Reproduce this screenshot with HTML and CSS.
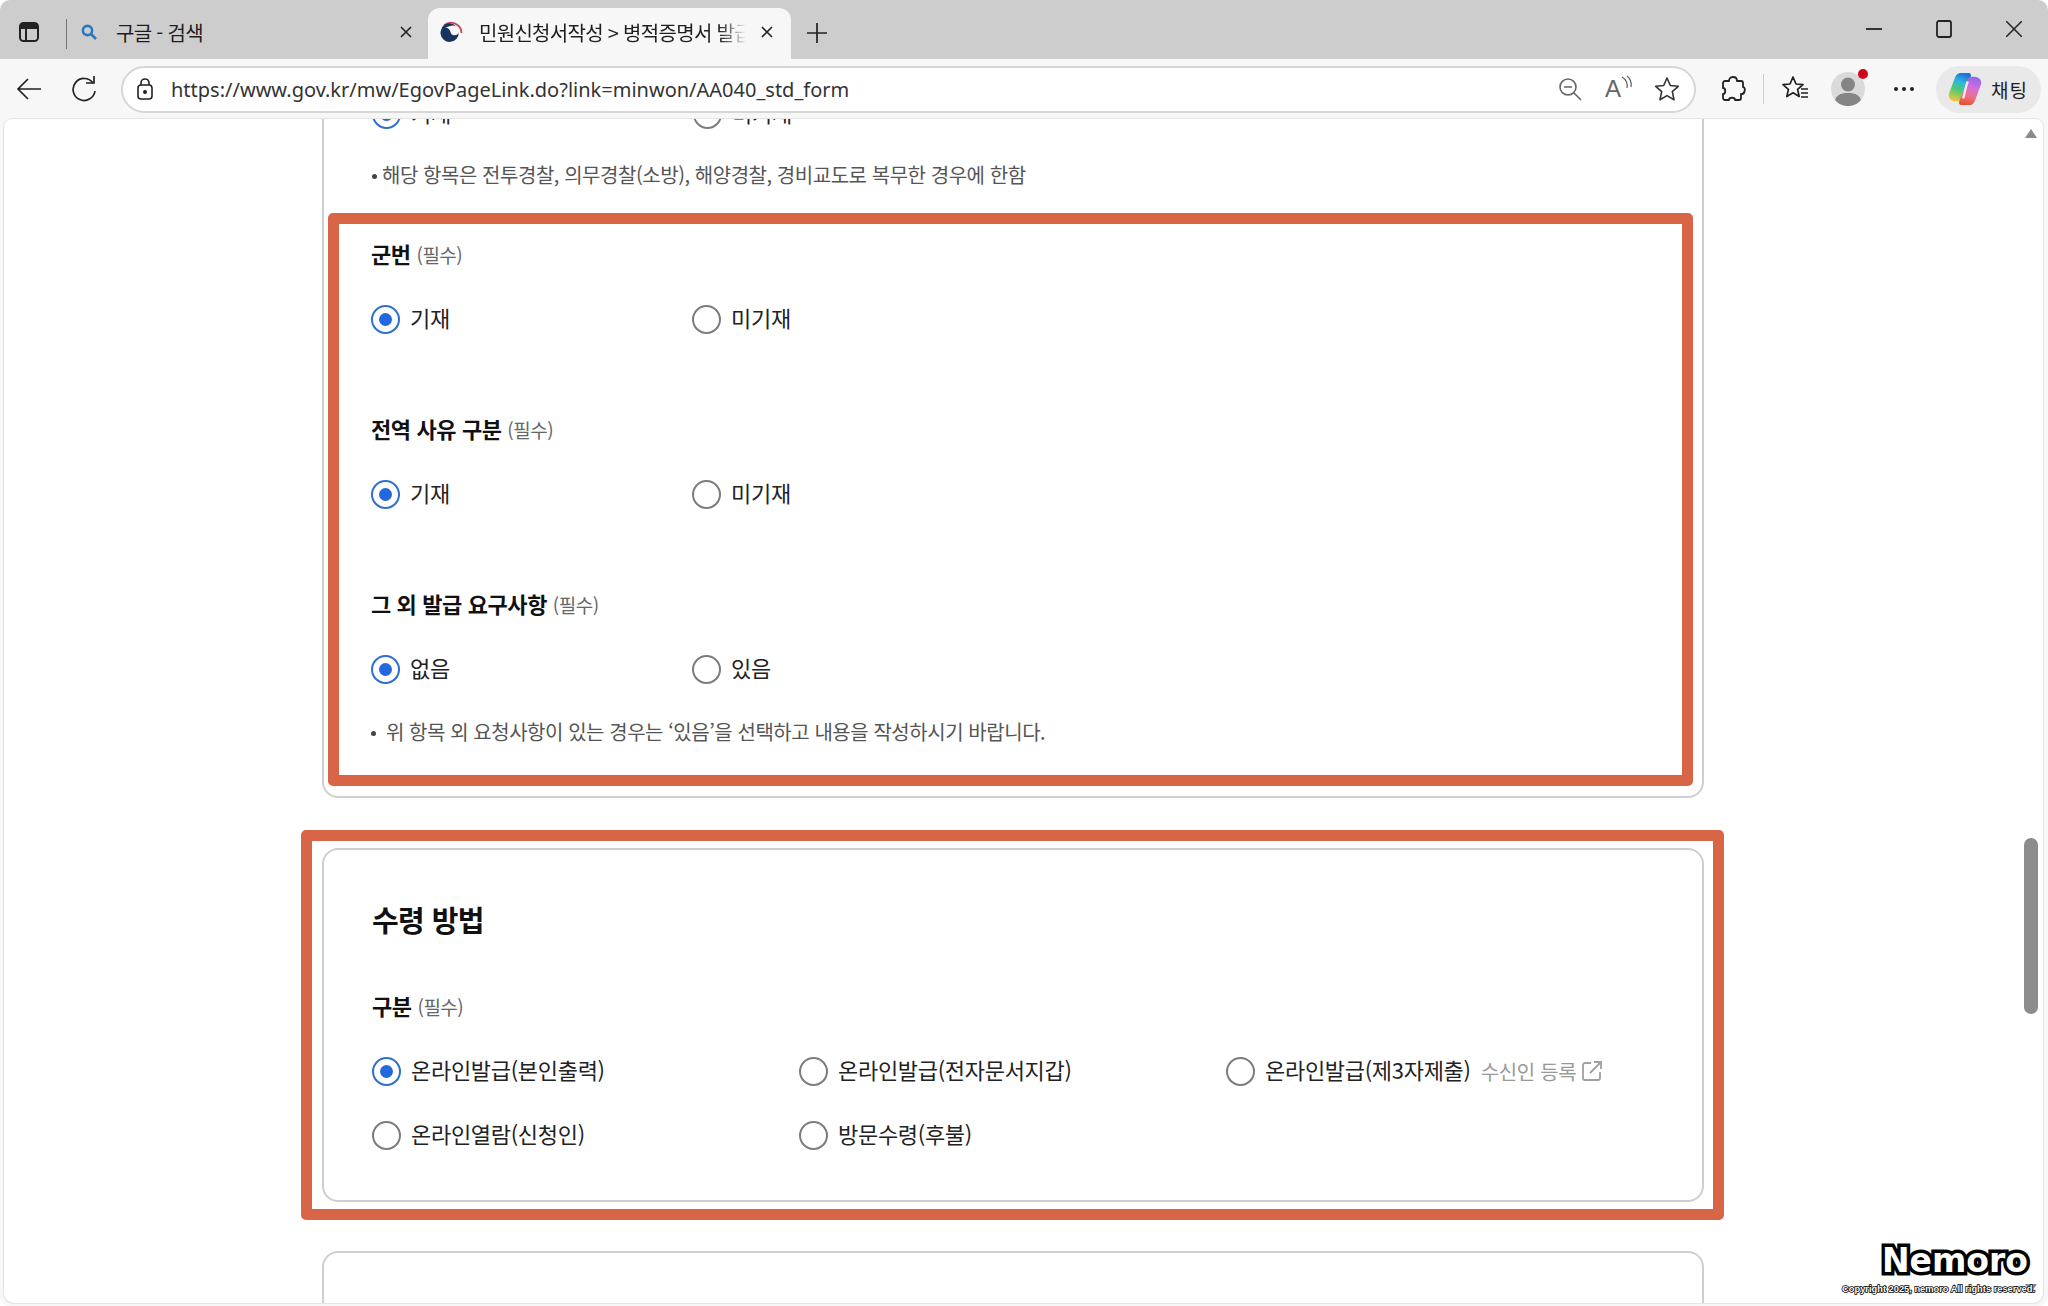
FILE: index.html
```html
<!DOCTYPE html>
<html lang="ko">
<head>
	<meta charset="utf-8">
	<title>민원신청서작성 &gt; 병적증명서 발급</title>
	<link rel="stylesheet" href="styles.css">
</head>
<body>
<div class="window">
	<div class="tabbar">
		<svg class="tab-side" width="22" height="22" viewBox="0 0 22 22" fill="none" stroke="#222" stroke-width="2"><rect x="2" y="2" width="18" height="18" rx="3.5"/><path d="M2 7h18M8 7v13" /><path d="M3 3h16v4H3z" fill="#222" stroke="none"/></svg>
		<div class="tab-sep"></div>
		<div class="tab">
			<svg width="18" height="18" viewBox="0 0 18 18" fill="none" stroke="#2a78c2" stroke-width="2.6"><circle cx="7.5" cy="7.5" r="4.6"/><path d="M11 11l5 5"/></svg>
			<span class="tab-title">구글 - 검색</span>
			<svg class="tab-x" width="14" height="14" viewBox="0 0 14 14" stroke="#222" stroke-width="1.6"><path d="M2 2l10 10M12 2L2 12"/></svg>
		</div>
		<div class="tab tab-active">
			<svg width="24" height="24" viewBox="0 0 24 24" fill="none"><path d="M5 5.500A10.500 10.500 0 0 1 22.500 13" stroke="#c9485c" stroke-width="1.800"/><path d="M1.500 13.500a5 5 0 0 1 10-1.500 4.200 4.200 0 0 0 8.200 0 9 9 0 0 1-18.200 1.500z" fill="#17335f"/><path d="M2 11a8.500 8.500 0 0 1 15-4.500 7 7 0 0 0-6-.5c-3 .8-6 2.500-9 5z" fill="#17335f"/></svg>
			<span class="tab-title tab-fade">민원신청서작성 &gt; 병적증명서 발급</span>
			<svg class="tab-x" width="14" height="14" viewBox="0 0 14 14" stroke="#222" stroke-width="1.6"><path d="M2 2l10 10M12 2L2 12"/></svg>
		</div>
		<svg class="tab-plus" width="22" height="22" viewBox="0 0 22 22" stroke="#222" stroke-width="1.7"><path d="M11 1v20M1 11h20"/></svg>
		<div class="win-btns">
			<svg width="16" height="16" viewBox="0 0 16 16" stroke="#222" stroke-width="1.8"><path d="M0 8h16"/></svg>
			<svg width="16" height="18" viewBox="0 0 16 18" fill="none" stroke="#222" stroke-width="1.8"><rect x="1" y="1" width="14" height="16" rx="2"/></svg>
			<svg width="16" height="16" viewBox="0 0 16 16" stroke="#222" stroke-width="1.5"><path d="M0 0l16 16M16 0L0 16"/></svg>
		</div>
	</div>

	<div class="toolbar">
		<svg class="tool-back" width="26" height="24" viewBox="0 0 26 24" fill="none" stroke="#222" stroke-width="1.7"><path d="M25 12H2M12 2L2 12l10 10"/></svg>
		<svg class="tool-reload" width="26" height="26" viewBox="0 0 26 26" fill="none" stroke="#222" stroke-width="1.7"><path d="M22 7a11 11 0 1 0 2 8"/><path d="M15 7h8V0" /></svg>
		<div class="address">
			<svg width="18" height="24" viewBox="0 0 18 24" fill="none" stroke="#222" stroke-width="1.6"><rect x="2" y="8" width="14" height="14" rx="3"/><path d="M5 8V6a4 4 0 0 1 8 0v2"/><circle cx="9" cy="15" r="1.200" fill="#222"/></svg>
			<span class="url">https://www.gov.kr/mw/EgovPageLink.do?link=minwon/AA040_std_form</span>
			<svg class="addr-zoom" width="24" height="24" viewBox="0 0 24 24" fill="none" stroke="#666" stroke-width="1.6"><circle cx="10" cy="10" r="8"/><path d="M6 10h8M16 16l7 7"/></svg>
			<span class="addr-read">A<svg width="12" height="18" viewBox="0 0 12 18" fill="none" stroke="#666" stroke-width="1.300"><path d="M1 2c4 2 6 7 5 11M6 1c3 2 5 7 4 11"/></svg></span>
			<svg class="addr-star" width="26" height="26" viewBox="0 0 26 26" fill="none" stroke="#333" stroke-width="1.6" stroke-linejoin="round"><path d="M13 2l3.300 7.500 8 .8-6 5.400 1.700 8L13 19.600 6 23.700l1.700-8-6-5.400 8-.8z"/></svg>
		</div>
		<svg class="tool-ext" width="26" height="28" viewBox="0 0 26 28" fill="none" stroke="#222" stroke-width="1.8" stroke-linejoin="round"><path d="M13 2c3 0 4 2 4 4h4a2 2 0 0 1 2 2v4c3 0 2 7-1 7h-1v4a2 2 0 0 1-2 2h-4c0-3-6-3-6 0H5a2 2 0 0 1-2-2v-4c3 0 3-6 0-6V8a2 2 0 0 1 2-2h4c0-2 1-4 4-4z"/></svg>
		<div class="tool-sep"></div>
		<svg class="tool-fav" width="28" height="28" viewBox="0 0 28 28" fill="none" stroke="#222" stroke-width="1.700" stroke-linejoin="round"><path d="M11 2l3 7 7 .6-5.400 4.800 1.600 7.100-6.200-3.700-6.200 3.700 1.600-7.100L1 9.600 8 9z"/><path d="M19 14h7M19 18h7M19 22h7" /></svg>
		<div class="avatar">
			<svg width="34" height="34" viewBox="0 0 34 34"><circle cx="17" cy="17" r="17" fill="#dadada"/><circle cx="17" cy="12.500" r="7" fill="#858585"/><path d="M4 28c2-6 7-7 13-7s11 1 13 7a17 17 0 0 1-26 0z" fill="#858585"/></svg>
			<span class="avatar-dot"></span>
		</div>
		<div class="tool-more"><i></i><i></i><i></i></div>
		<div class="chat">
			<svg width="34" height="36" viewBox="0 0 36 38"><defs><linearGradient id="cpLeft" x1="0.600" y1="0" x2="0.300" y2="1"><stop offset="0" stop-color="#1f6fd8"/><stop offset="0.300" stop-color="#2fb4e0"/><stop offset="0.600" stop-color="#4fcb72"/><stop offset="1" stop-color="#f2c53d"/></linearGradient><linearGradient id="cpRight" x1="0.600" y1="0" x2="0.400" y2="1"><stop offset="0" stop-color="#8f6be8"/><stop offset="0.400" stop-color="#d76fd8"/><stop offset="0.700" stop-color="#f0708a"/><stop offset="1" stop-color="#e8502f"/></linearGradient></defs><path d="M13 2h9c2 0 3 2 2 4L15 29c-1 2-2 3-4 3H8c-5 0-8-4-7-8l6-16c1-3 3-6 6-6z" fill="url(#cpLeft)"/><path d="M23 36H14c-2 0-3-2-2-4L21 9c1-2 2-3 4-3h3c5 0 8 4 7 8l-6 16c-1 3-3 6-6 6z" fill="url(#cpRight)"/><path d="M21 11c-2 4-3 11-5 18" fill="none" stroke="#f6e6ee" stroke-width="2.500"/></svg>
			<span>채팅</span>
		</div>
	</div>

	<div class="viewport">
		<div class="page">
			<div class="card card-top">
				<div class="radios radios-two">
					<label class="radio"><span class="dot dot-on"></span>기재</label>
					<label class="radio"><span class="dot"></span>미기재</label>
				</div>
				<p class="note note-top">해당 항목은 전투경찰, 의무경찰(소방), 해양경찰, 경비교도로 복무한 경우에 한함</p>
				<div class="mark mark-inner">
					<div class="field-label"><b>군번</b> <small>(필수)</small></div>
					<div class="radios radios-two">
						<label class="radio"><span class="dot dot-on"></span>기재</label>
						<label class="radio"><span class="dot"></span>미기재</label>
					</div>
					<div class="field-label field-next"><b>전역 사유 구분</b> <small>(필수)</small></div>
					<div class="radios radios-two">
						<label class="radio"><span class="dot dot-on"></span>기재</label>
						<label class="radio"><span class="dot"></span>미기재</label>
					</div>
					<div class="field-label field-next"><b>그 외 발급 요구사항</b> <small>(필수)</small></div>
					<div class="radios radios-two">
						<label class="radio"><span class="dot dot-on"></span>없음</label>
						<label class="radio"><span class="dot"></span>있음</label>
					</div>
					<p class="note note-bottom">위 항목 외 요청사항이 있는 경우는 ‘있음’을 선택하고 내용을 작성하시기 바랍니다.</p>
				</div>
			</div>

			<div class="mark mark-outer">
				<div class="card card-receive">
					<h2 class="card-title">수령 방법</h2>
					<div class="field-label field-receive"><b>구분</b> <small>(필수)</small></div>
					<div class="radios radios-three">
						<label class="radio"><span class="dot dot-on"></span>온라인발급(본인출력)</label>
						<label class="radio"><span class="dot"></span>온라인발급(전자문서지갑)</label>
						<label class="radio"><span class="dot"></span>온라인발급(제3자제출)<a class="reg-link">수신인 등록<svg width="20" height="20" viewBox="0 0 20 20" fill="none" stroke="#a0a0a0" stroke-width="1.800"><path d="M9 2H3a2 2 0 0 0-2 2v13a2 2 0 0 0 2 2h13a2 2 0 0 0 2-2v-6M12 1h7v7M19 1L8 12"/></svg></a></label>
						<label class="radio"><span class="dot"></span>온라인열람(신청인)</label>
						<label class="radio"><span class="dot"></span>방문수령(후불)</label>
					</div>
				</div>
			</div>

			<div class="card card-next"></div>
		</div>
		<div class="scrollbar">
			<span class="scroll-up"></span>
			<span class="scroll-thumb"></span>
			<span class="scroll-down"></span>
		</div>
	</div>

	<div class="watermark">
		<div class="wm-name">Nemoro</div>
		<div class="wm-copy">Copyright 2025, nemoro All rights reserved.</div>
	</div>
</div>
</body>
</html>
```

FILE: styles.css
```css
* {
	box-sizing: border-box;
}
body {
	margin: 0;
	background: #fff;
	font-family: "Noto Sans CJK KR", "Noto Sans", sans-serif;
	color: #1e1e1e;
}
.window {
	position: relative;
	width: 2048px;
	height: 1306px;
	display: flex;
	flex-direction: column;
	background: #f7f7f7;
	border-radius: 10px;
	overflow: hidden;
}

/* tab strip */
.tabbar {
	height: 59px;
	flex: none;
	display: flex;
	align-items: flex-end;
	background: #cdcdcd;
}
.tab-side {
	margin: 0 0 16px 18px;
}
.tab-sep {
	width: 1px;
	height: 30px;
	margin: 0 0 10px 26px;
	background: #777;
}
.tab {
	height: 51px;
	display: flex;
	align-items: center;
	font-size: 20px;
	letter-spacing: -0.7px;
}
.tab:nth-of-type(2) {
	width: 361px;
	padding: 0 15px 3px 13px;
}
.tab .tab-title {
	margin-left: 18px;
	flex: 1;
	white-space: nowrap;
	overflow: hidden;
}
.tab-x {
	flex: none;
}
.tab-active {
	width: 363px;
	padding: 0 17px 3px 11px;
	background: #f7f7f7;
	border-radius: 12px 12px 0 0;
}
.tab-active .tab-title {
	margin-left: 16px;
	margin-right: 14px;
}
.tab-fade {
	-webkit-mask-image: linear-gradient(90deg, #000 90%, transparent);
	mask-image: linear-gradient(90deg, #000 90%, transparent);
}
.tab-plus {
	margin: 0 0 15px 15px;
}
.win-btns {
	margin: 0 26px 21px auto;
	display: flex;
	align-items: center;
	gap: 54px;
}

/* toolbar */
.toolbar {
	height: 60px;
	flex: none;
	display: flex;
	align-items: center;
}
.tool-back {
	margin-left: 16px;
}
.tool-reload {
	margin-left: 29px;
}
.address {
	width: 1575px;
	height: 47px;
	margin-left: 24px;
	padding: 0 14px 0 13px;
	display: flex;
	align-items: center;
	background: #fff;
	border: 2px solid #d6d6d6;
	border-radius: 24px;
}
.url {
	margin-left: 17px;
	flex: 1;
	font-family: "Noto Sans", sans-serif;
	font-size: 20px;
	color: #333;
}
.addr-zoom {
	margin-right: 23px;
}
.addr-read {
	width: 28px;
	margin-right: 21px;
	display: flex;
	font-family: "Liberation Sans", sans-serif;
	font-size: 24px;
	color: #666;
}
.tool-ext {
	margin-left: 24px;
}
.tool-sep {
	width: 1px;
	height: 30px;
	margin-left: 17px;
	background: #ccc;
}
.tool-fav {
	margin-left: 18px;
}
.avatar {
	position: relative;
	width: 34px;
	height: 34px;
	margin-left: 21px;
}
.avatar-dot {
	position: absolute;
	top: -3px;
	right: -3px;
	width: 10px;
	height: 10px;
	border-radius: 50%;
	background: #d0021b;
}
.tool-more {
	margin-left: 29px;
	width: 20px;
	display: flex;
	justify-content: space-between;
}
.tool-more i {
	width: 4px;
	height: 4px;
	border-radius: 50%;
	background: #222;
}
.chat {
	width: 105px;
	height: 47px;
	margin-left: 22px;
	padding-left: 12px;
	display: flex;
	align-items: center;
	gap: 9px;
	background: #e9e9e9;
	border-radius: 24px;
	font-size: 19px;
	letter-spacing: 1px;
}

/* page */
.viewport {
	flex: 1;
	min-height: 0;
	margin: 0 5px 3px 4px;
	display: flex;
	background: #fff;
	border-radius: 8px 8px 10px 10px;
	overflow: hidden;
	box-shadow: 0 0 0 1px #e4e4e4;
}
.page {
	flex: 1;
	padding-left: 297px;
	overflow: hidden;
}
.card {
	width: 1382px;
	margin-left: 21px;
	background: #fff;
	border: 2px solid #cfcfcf;
	border-radius: 16px;
}
.card-top {
	margin-top: -27px;
	padding: 0 9px 10px 4px;
}
.card-top > .radios {
	padding-left: 44px;
}
.mark {
	border: 11px solid #d76546;
	border-radius: 5px;
}
.mark-inner {
	margin-top: 24px;
	padding: 15px 32px 29px 32px;
}
.mark-outer {
	width: 1423px;
	margin-top: 32px;
	padding: 7px 9px 7px 10px;
}
.mark-outer .card {
	margin-left: 0;
}
.card-receive {
	height: 354px;
	padding: 49px 0 0 48px;
}
.card-next {
	height: 120px;
	margin-top: 31px;
}
.card-title {
	margin: 0;
	height: 40px;
	line-height: 40px;
	font-size: 29px;
	font-weight: 700;
	letter-spacing: -0.6px;
	color: #111;
}

/* form fields */
.field-label {
	height: 32px;
	line-height: 29px;
	font-size: 22px;
	letter-spacing: -0.4px;
	color: #111;
}
.field-label small {
	font-size: 19px;
	letter-spacing: -0.5px;
	color: #666;
}
.field-next {
	margin-top: 75px;
}
.field-receive {
	margin-top: 52px;
}
.radios {
	display: grid;
	margin-top: 28px;
	row-gap: 24px;
}
.card-top > .radios {
	margin-top: 0;
}
.radios-two {
	grid-template-columns: 321px 321px;
}
.radios-three {
	grid-template-columns: 427px 427px 427px;
}
.radio {
	height: 40px;
	display: flex;
	align-items: flex-start;
	gap: 10px;
	font-size: 22px;
	line-height: 37px;
	letter-spacing: -0.3px;
	color: #222;
	white-space: nowrap;
}
.dot {
	position: relative;
	width: 29px;
	height: 29px;
	margin-top: 5.5px;
	flex: none;
	background: #fff;
	border: 2px solid #7c7c7c;
	border-radius: 50%;
}
.dot-on {
	border-color: #2f6fd0;
}
.dot-on::after {
	content: "";
	position: absolute;
	inset: 6px;
	border-radius: 50%;
	background: #2368dc;
}
.reg-link {
	height: 40px;
	display: flex;
	align-items: center;
	gap: 6px;
	font-size: 20px;
	letter-spacing: -0.3px;
	color: #999;
}
.note {
	position: relative;
	margin: 0;
	height: 28px;
	line-height: 28px;
	font-size: 20px;
	letter-spacing: -0.45px;
	color: #555;
	white-space: nowrap;
}
.note::before {
	content: "";
	position: absolute;
	left: 0;
	top: 13px;
	width: 5px;
	height: 5px;
	border-radius: 50%;
	background: #444;
}
.note-top {
	margin-top: 27px;
	padding-left: 10px;
	margin-left: 44px;
}
.note-bottom {
	margin-top: 29px;
	padding-left: 15px;
}

/* scrollbar */
.scrollbar {
	position: relative;
	width: 18px;
	flex: none;
	margin-right: 3px;
}
.scroll-up {
	position: absolute;
	top: 10px;
	left: 3px;
	border: 6px solid transparent;
	border-top: 0;
	border-bottom: 9px solid #8a8a8a;
}
.scroll-thumb {
	position: absolute;
	top: 719px;
	left: 2px;
	width: 14px;
	height: 176px;
	border-radius: 7px;
	background: #8c8c8c;
}
.scroll-down {
	position: absolute;
	bottom: 10px;
	left: 3px;
	border: 6px solid transparent;
	border-bottom: 0;
	border-top: 9px solid #8a8a8a;
}

/* logo stamped over the corner */
.watermark {
	position: absolute;
	right: 13px;
	bottom: 11px;
	width: 194px;
	text-align: right;
	color: #fff;
	font-family: "DejaVu Sans", sans-serif;
	font-weight: 700;
	-webkit-text-stroke-color: #000;
}
.wm-name {
	padding-right: 7px;
	font-size: 33px;
	line-height: 38px;
	-webkit-text-stroke-width: 7px;
	paint-order: stroke fill;
}
.wm-copy {
	margin-top: 3px;
	font-family: "Liberation Sans", sans-serif;
	font-size: 9.3px;
	line-height: 12px;
	white-space: nowrap;
	-webkit-text-stroke-width: 1.5px;
	paint-order: stroke fill;
}
```
